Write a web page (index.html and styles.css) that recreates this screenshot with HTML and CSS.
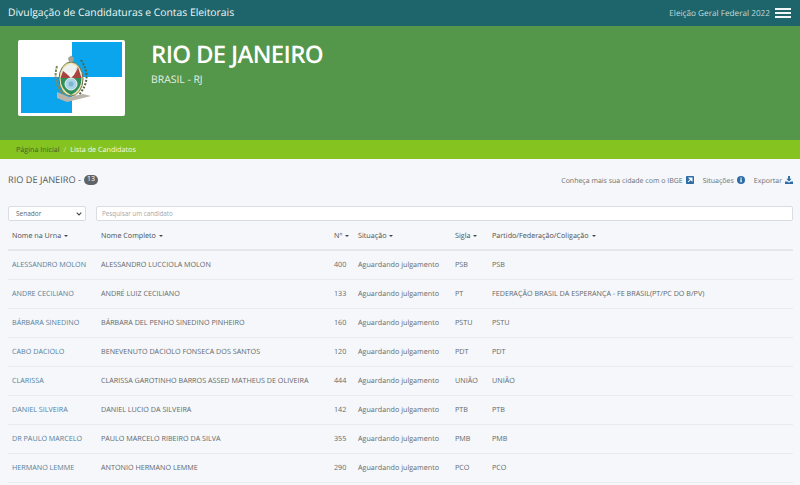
FILE: index.html
```html
<!DOCTYPE html>
<html lang="pt-BR">
<head>
<meta charset="utf-8">
<title>Divulgação de Candidaturas e Contas Eleitorais</title>
<link rel="stylesheet" href="styles.css">
</head>
<body>
<header class="topbar">
  <span class="topbar-title">Divulgação de Candidaturas e Contas Eleitorais</span>
  <div class="topbar-right">
    <span class="topbar-election">Eleição Geral Federal 2022</span>
    <span class="burger"><i></i><i></i><i></i></span>
  </div>
</header>
<section class="hero">
  <div class="flag">
    <svg viewBox="0 0 101 72" preserveAspectRatio="none" class="flag-svg">
      <rect width="101" height="72" fill="#fff"/>
      <rect x="51" y="0" width="50" height="35" fill="#0aa5ec"/>
      <rect x="0" y="35" width="51" height="36" fill="#0aa5ec"/>
      <path d="M36 24 Q31 42 44 54" fill="none" stroke="#7d8a5c" stroke-width="2" stroke-dasharray="2.500 1"/>
      <path d="M60 18 Q72 36 58 53" fill="none" stroke="#55633f" stroke-width="2" stroke-dasharray="2 1.500"/>
      <path d="M36 50 L48 55 L62 52 L70 54 L58 57 L46 60 L36 56Z" fill="#b9b5ad"/>
      <ellipse cx="50" cy="37" rx="12" ry="17" fill="#efe3ae" stroke="#69754f"/>
      <path d="M39.500 36 Q40 25 50 21.500 Q60 25 60.500 36Z" fill="#eef1ee"/>
      <path d="M39.500 36 L42 29 L47 33 L52 31 L57 25 L60.500 36Z" fill="#a8433f"/>
      <path d="M43 27 L50 31 L57 26 L53 33 L50 36 L47 33Z" fill="#f4f4f1"/>
      <path d="M39.500 36 H60.500 Q60.500 48 50 53 Q39.500 48 39.500 36Z" fill="#2f8f5c"/>
      <circle cx="50" cy="42" r="6" fill="#a9d3e6" stroke="#eef2ee"/>
      <circle cx="50" cy="42" r="2.500" fill="#7fb4cf"/>
      <path d="M47 16 L50 13.500 L53 16 L52 20 H48Z" fill="#a3a394"/>
    </svg>
  </div>
  <div class="hero-text">
    <h1>RIO DE JANEIRO</h1>
    <p>BRASIL - RJ</p>
  </div>
</section>
<nav class="crumbs">
  <span class="crumb-home">Página Inicial</span>
  <span class="crumb-sep">/</span>
  <span class="crumb-current">Lista de Candidatos</span>
</nav>
<main class="content">
  <div class="toolbar">
    <div class="place">RIO DE JANEIRO - <span class="badge">13</span></div>
    <div class="actions">
      <span class="action">Conheça mais sua cidade com o IBGE
        <svg class="icon" viewBox="0 0 10 10"><rect width="10" height="10" rx="1" fill="#2c6da8"/><path d="M2.500 7.500 L6.500 3.500 M4 2.500 H7.500 V6Z" stroke="#fff" stroke-width="1.300" fill="#fff"/></svg>
      </span>
      <span class="action">Situações
        <svg class="icon" viewBox="0 0 10 10"><circle cx="5" cy="5" r="5" fill="#2c6da8"/><rect x="4.200" y="4.200" width="1.700" height="3.600" fill="#fff"/><rect x="4.200" y="2" width="1.700" height="1.500" fill="#fff"/></svg>
      </span>
      <span class="action">Exportar
        <svg class="icon" viewBox="0 0 10 10"><path d="M3.800 0 H6.200 V3.500 H8.300 L5 7 L1.700 3.500 H3.800Z" fill="#2c6da8"/><path d="M0 7 H2.800 L5 8.500 L7.200 7 H10 V10 H0Z" fill="#2c6da8"/></svg>
      </span>
    </div>
  </div>
  <div class="filters">
    <div class="office-wrap">
      <select class="office"><option>Senador</option></select>
      <svg class="chevron" viewBox="0 0 6 4"><path d="M0.700 0.700 L3 3 L5.300 0.700" fill="none" stroke="#44484c" stroke-width="1.100"/></svg>
    </div>
    <input class="search" type="text" placeholder="Pesquisar um candidato">
  </div>
  <table class="grid">
    <colgroup>
      <col class="c-urna"><col class="c-nome"><col class="c-num"><col class="c-sit"><col class="c-sigla"><col>
    </colgroup>
    <thead>
      <tr>
        <th>Nome na Urna <b class="caret"></b></th>
        <th>Nome Completo <b class="caret"></b></th>
        <th>Nº <b class="caret"></b></th>
        <th>Situação <b class="caret"></b></th>
        <th>Sigla <b class="caret"></b></th>
        <th>Partido/Federação/Coligação <b class="caret"></b></th>
      </tr>
    </thead>
    <tbody>
      <tr><td class="link">ALESSANDRO MOLON</td><td>ALESSANDRO LUCCIOLA MOLON</td><td>400</td><td>Aguardando julgamento</td><td>PSB</td><td>PSB</td></tr>
      <tr><td class="link">ANDRE CECILIANO</td><td>ANDRÉ LUIZ CECILIANO</td><td>133</td><td>Aguardando julgamento</td><td>PT</td><td>FEDERAÇÃO BRASIL DA ESPERANÇA - FE BRASIL(PT/PC DO B/PV)</td></tr>
      <tr><td class="link">BÁRBARA SINEDINO</td><td>BÁRBARA DEL PENHO SINEDINO PINHEIRO</td><td>160</td><td>Aguardando julgamento</td><td>PSTU</td><td>PSTU</td></tr>
      <tr><td class="link">CABO DACIOLO</td><td>BENEVENUTO DACIOLO FONSECA DOS SANTOS</td><td>120</td><td>Aguardando julgamento</td><td>PDT</td><td>PDT</td></tr>
      <tr><td class="link">CLARISSA</td><td>CLARISSA GAROTINHO BARROS ASSED MATHEUS DE OLIVEIRA</td><td>444</td><td>Aguardando julgamento</td><td>UNIÃO</td><td>UNIÃO</td></tr>
      <tr><td class="link">DANIEL SILVEIRA</td><td>DANIEL LUCIO DA SILVEIRA</td><td>142</td><td>Aguardando julgamento</td><td>PTB</td><td>PTB</td></tr>
      <tr><td class="link">DR PAULO MARCELO</td><td>PAULO MARCELO RIBEIRO DA SILVA</td><td>355</td><td>Aguardando julgamento</td><td>PMB</td><td>PMB</td></tr>
      <tr><td class="link">HERMANO LEMME</td><td>ANTONIO HERMANO LEMME</td><td>290</td><td>Aguardando julgamento</td><td>PCO</td><td>PCO</td></tr>
    </tbody>
  </table>
</main>
</body>
</html>
```
FILE: styles.css
```css
* { box-sizing: border-box; }
html, body { height: 100%; }
body {
  margin: 0;
  height: 485px;
  overflow: hidden;
  background: #f5f7fa;
  color: #63686c;
  font-family: "Open Sans", "Liberation Sans", sans-serif;
  font-size: 7.200px;
  text-rendering: geometricPrecision;
}
.topbar {
  height: 26px;
  background: #1d656b;
  display: flex;
  align-items: center;
  justify-content: space-between;
  padding: 0 9px 0 8px;
}
.topbar-title { color: #f0f6f5; font-size: 10.350px; }
.topbar-right { display: flex; align-items: center; gap: 5px; }
.topbar-election { color: #c6dbd9; font-size: 8.200px; }
.burger { display: flex; flex-direction: column; gap: 2px; width: 16px; }
.burger i { display: block; height: 2px; background: #f2f6f6; }
.hero {
  height: 114px;
  background: #54964a;
  padding: 14px 18px 0;
  display: flex;
  align-items: flex-start;
  gap: 26px;
}
.flag {
  width: 107px;
  height: 76px;
  background: #fff;
  border-radius: 2px;
  padding: 2px 3px;
  flex: none;
}
.flag-svg { display: block; width: 100%; height: 100%; }
.hero-text h1 {
  margin: 0;
  color: #fff;
  font-size: 24px;
  line-height: 30px;
  font-weight: 600;
  letter-spacing: -0.7px;
}
.hero-text p {
  margin: 3px 0 0;
  color: #e6f0e4;
  font-size: 10.400px;
  line-height: 14px;
}
.crumbs {
  height: 19px;
  background: #85c320;
  padding: 0 16px;
  display: flex;
  align-items: center;
  gap: 4px;
  font-size: 7.200px;
}
.crumb-home { color: #3f5f2f; }
.crumb-sep { color: #c9e68f; }
.crumb-current { color: #f4f9e8; }
.content { padding: 0 7px 0 8px; }
.toolbar {
  height: 47px;
  display: flex;
  align-items: flex-start;
  justify-content: space-between;
  padding-top: 14px;
}
.place { font-size: 9.200px; color: #55595d; display: flex; align-items: center; gap: 3px; }
.badge {
  background: #5f6468;
  color: #fff;
  border-radius: 6px;
  font-size: 7px;
  line-height: 10px;
  padding: 0 3px;
}
.actions { display: flex; gap: 9px; padding-top: 3px; }
.action { display: flex; align-items: center; gap: 3px; color: #6a6f73; font-size: 7px; line-height: 10px; }
.icon { width: 8px; height: 8px; display: block; margin-bottom: 3px; }
.filters { display: flex; gap: 10px; height: 15px; }
.office-wrap { position: relative; width: 78px; height: 15px; flex: none; }
.office {
  display: block;
  width: 100%;
  height: 15px;
  padding: 0 7px;
  border: 1px solid #d9dde1;
  border-radius: 2px;
  background: #fff;
  color: #60656a;
  appearance: none;
  font: 6.500px "Open Sans", "Liberation Sans", sans-serif;
}
.chevron {
  position: absolute;
  right: 4px;
  top: 6px;
  width: 6px;
  height: 4px;
  display: block;
}
.search {
  flex: 1;
  height: 15px;
  padding: 0 5px;
  border: 1px solid #d9dde1;
  border-radius: 2px;
  background: #fff;
  font: 6.300px "Open Sans", "Liberation Sans", sans-serif;
}
.search::placeholder { color: #a4a9ad; opacity: 1; }
.grid {
  width: 100%;
  margin-top: 1px;
  border-collapse: collapse;
  table-layout: fixed;
}
.c-urna { width: 89px; }
.c-nome { width: 233px; }
.c-num { width: 24px; }
.c-sit { width: 97px; }
.c-sigla { width: 37px; }
.grid th, .grid td { padding: 0 0 0 4px; text-align: left; white-space: nowrap; }
.grid th {
  height: 28px;
  font-weight: 500;
  color: #4a4e52;
  border-bottom: 2px solid #e4e7ea;
}
.grid td {
  height: 29px;
  border-bottom: 1px solid #e8ebee;
}
.grid td.link { color: #55809a; }
.caret {
  display: inline-block;
  width: 0;
  height: 0;
  margin-left: 1px;
  vertical-align: middle;
  border-top: 2.500px solid #44484c;
  border-left: 2.500px solid transparent;
  border-right: 2.500px solid transparent;
}
```
